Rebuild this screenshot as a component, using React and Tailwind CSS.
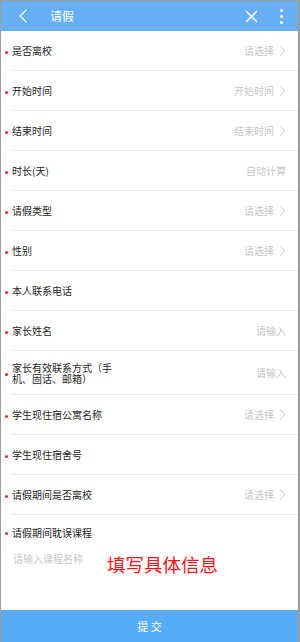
import React from 'react';

const FIELDS = [
  { label: '是否离校', value: '请选择', arrow: true },
  { label: '开始时间', value: '开始时间', arrow: true },
  { label: '结束时间', value: '结束时间', arrow: true },
  { label: '时长(天)', value: '自动计算' },
  { label: '请假类型', value: '请选择', arrow: true },
  { label: '性别', value: '请选择', arrow: true },
  { label: '本人联系电话', value: '' },
  { label: '家长姓名', value: '请输入' },
  { label: '家长有效联系方式（手机、固话、邮箱）', value: '请输入', tall: true },
  { label: '学生现住宿公寓名称', value: '请选择', arrow: true },
  { label: '学生现住宿舍号', value: '' },
  { label: '请假期间是否离校', value: '请选择', arrow: true },
];

const Chevron = () => (
  <svg width="7" height="11" viewBox="0 0 7 11" className="ml-[5px]">
    <path d="M1 0.6 L6 5.5 L1 10.4" fill="none" stroke="#c4c4c4" strokeWidth="1" />
  </svg>
);

const Dot = () => (
  <div className="w-[11px] shrink-0 flex items-center">
    <div className="w-[3px] h-[3px] rounded-full bg-[#e0242b] ml-[4px] mt-[2px]" />
  </div>
);

function Row({ field }) {
  return (
    <div className={`flex ${field.tall ? 'h-[44px]' : 'h-[40px]'}`}>
      <Dot />
      <div className="flex-1 flex items-center border-b border-[#ececec] pr-[12px]">
        <div className="w-[106px] shrink-0 text-[10px] leading-[11px] text-[#262626]">{field.label}</div>
        <div className="flex-1 flex items-center justify-end text-[10px] text-[#c6c6c6]">
          <span>{field.value}</span>
          {field.arrow && <Chevron />}
        </div>
      </div>
    </div>
  );
}

export default function App() {
  return (
    <div
      className="w-[300px] h-[642px] flex flex-col bg-white border-t border-l border-r-2 border-[#9c9c9c] overflow-hidden relative"
      style={{ fontFamily: '"Noto Sans CJK SC", "Noto Sans", sans-serif' }}
    >
      <header className="h-[30px] shrink-0 bg-[#66aff3] flex items-center text-white">
        <svg width="10" height="14" viewBox="0 0 10 14" className="ml-[17px]">
          <path d="M8.5 0.8 L2 7 L8.5 13.2" fill="none" stroke="#fff" strokeWidth="1.2" />
        </svg>
        <span className="ml-[22px] text-[12px] leading-none">请假</span>
        <div className="flex-1" />
        <svg width="13" height="13" viewBox="0 0 13 13" className="mr-[22px]">
          <path d="M1 1 L12 12 M12 1 L1 12" stroke="#fff" strokeWidth="1.5" />
        </svg>
        <div className="flex flex-col gap-[3px] mr-[15px] mt-[1px]">
          <div className="w-[3px] h-[3px] rounded-full bg-white" />
          <div className="w-[3px] h-[3px] rounded-full bg-white" />
          <div className="w-[3px] h-[3px] rounded-full bg-white" />
        </div>
      </header>

      <div className="flex-1 flex flex-col">
        {FIELDS.map((f) => (
          <Row key={f.label} field={f} />
        ))}
        <div className="flex-1 flex flex-col">
          <div className="flex items-center h-[34px]">
            <Dot />
            <span className="text-[10px] text-[#262626]">请假期间耽误课程</span>
          </div>
          <div className="pl-[12px] mt-[2px] text-[10px] text-[#c8c8c8]">请输入课程名称</div>
        </div>
      </div>

      <div className="absolute left-[106px] top-[551px] text-[18.5px] leading-[24px] text-[#f2161b]">
        填写具体信息
      </div>

      <button className="h-[32px] shrink-0 bg-[#56adf6] text-white text-[11px] flex items-center justify-center">
        提 交
      </button>
    </div>
  );
}
